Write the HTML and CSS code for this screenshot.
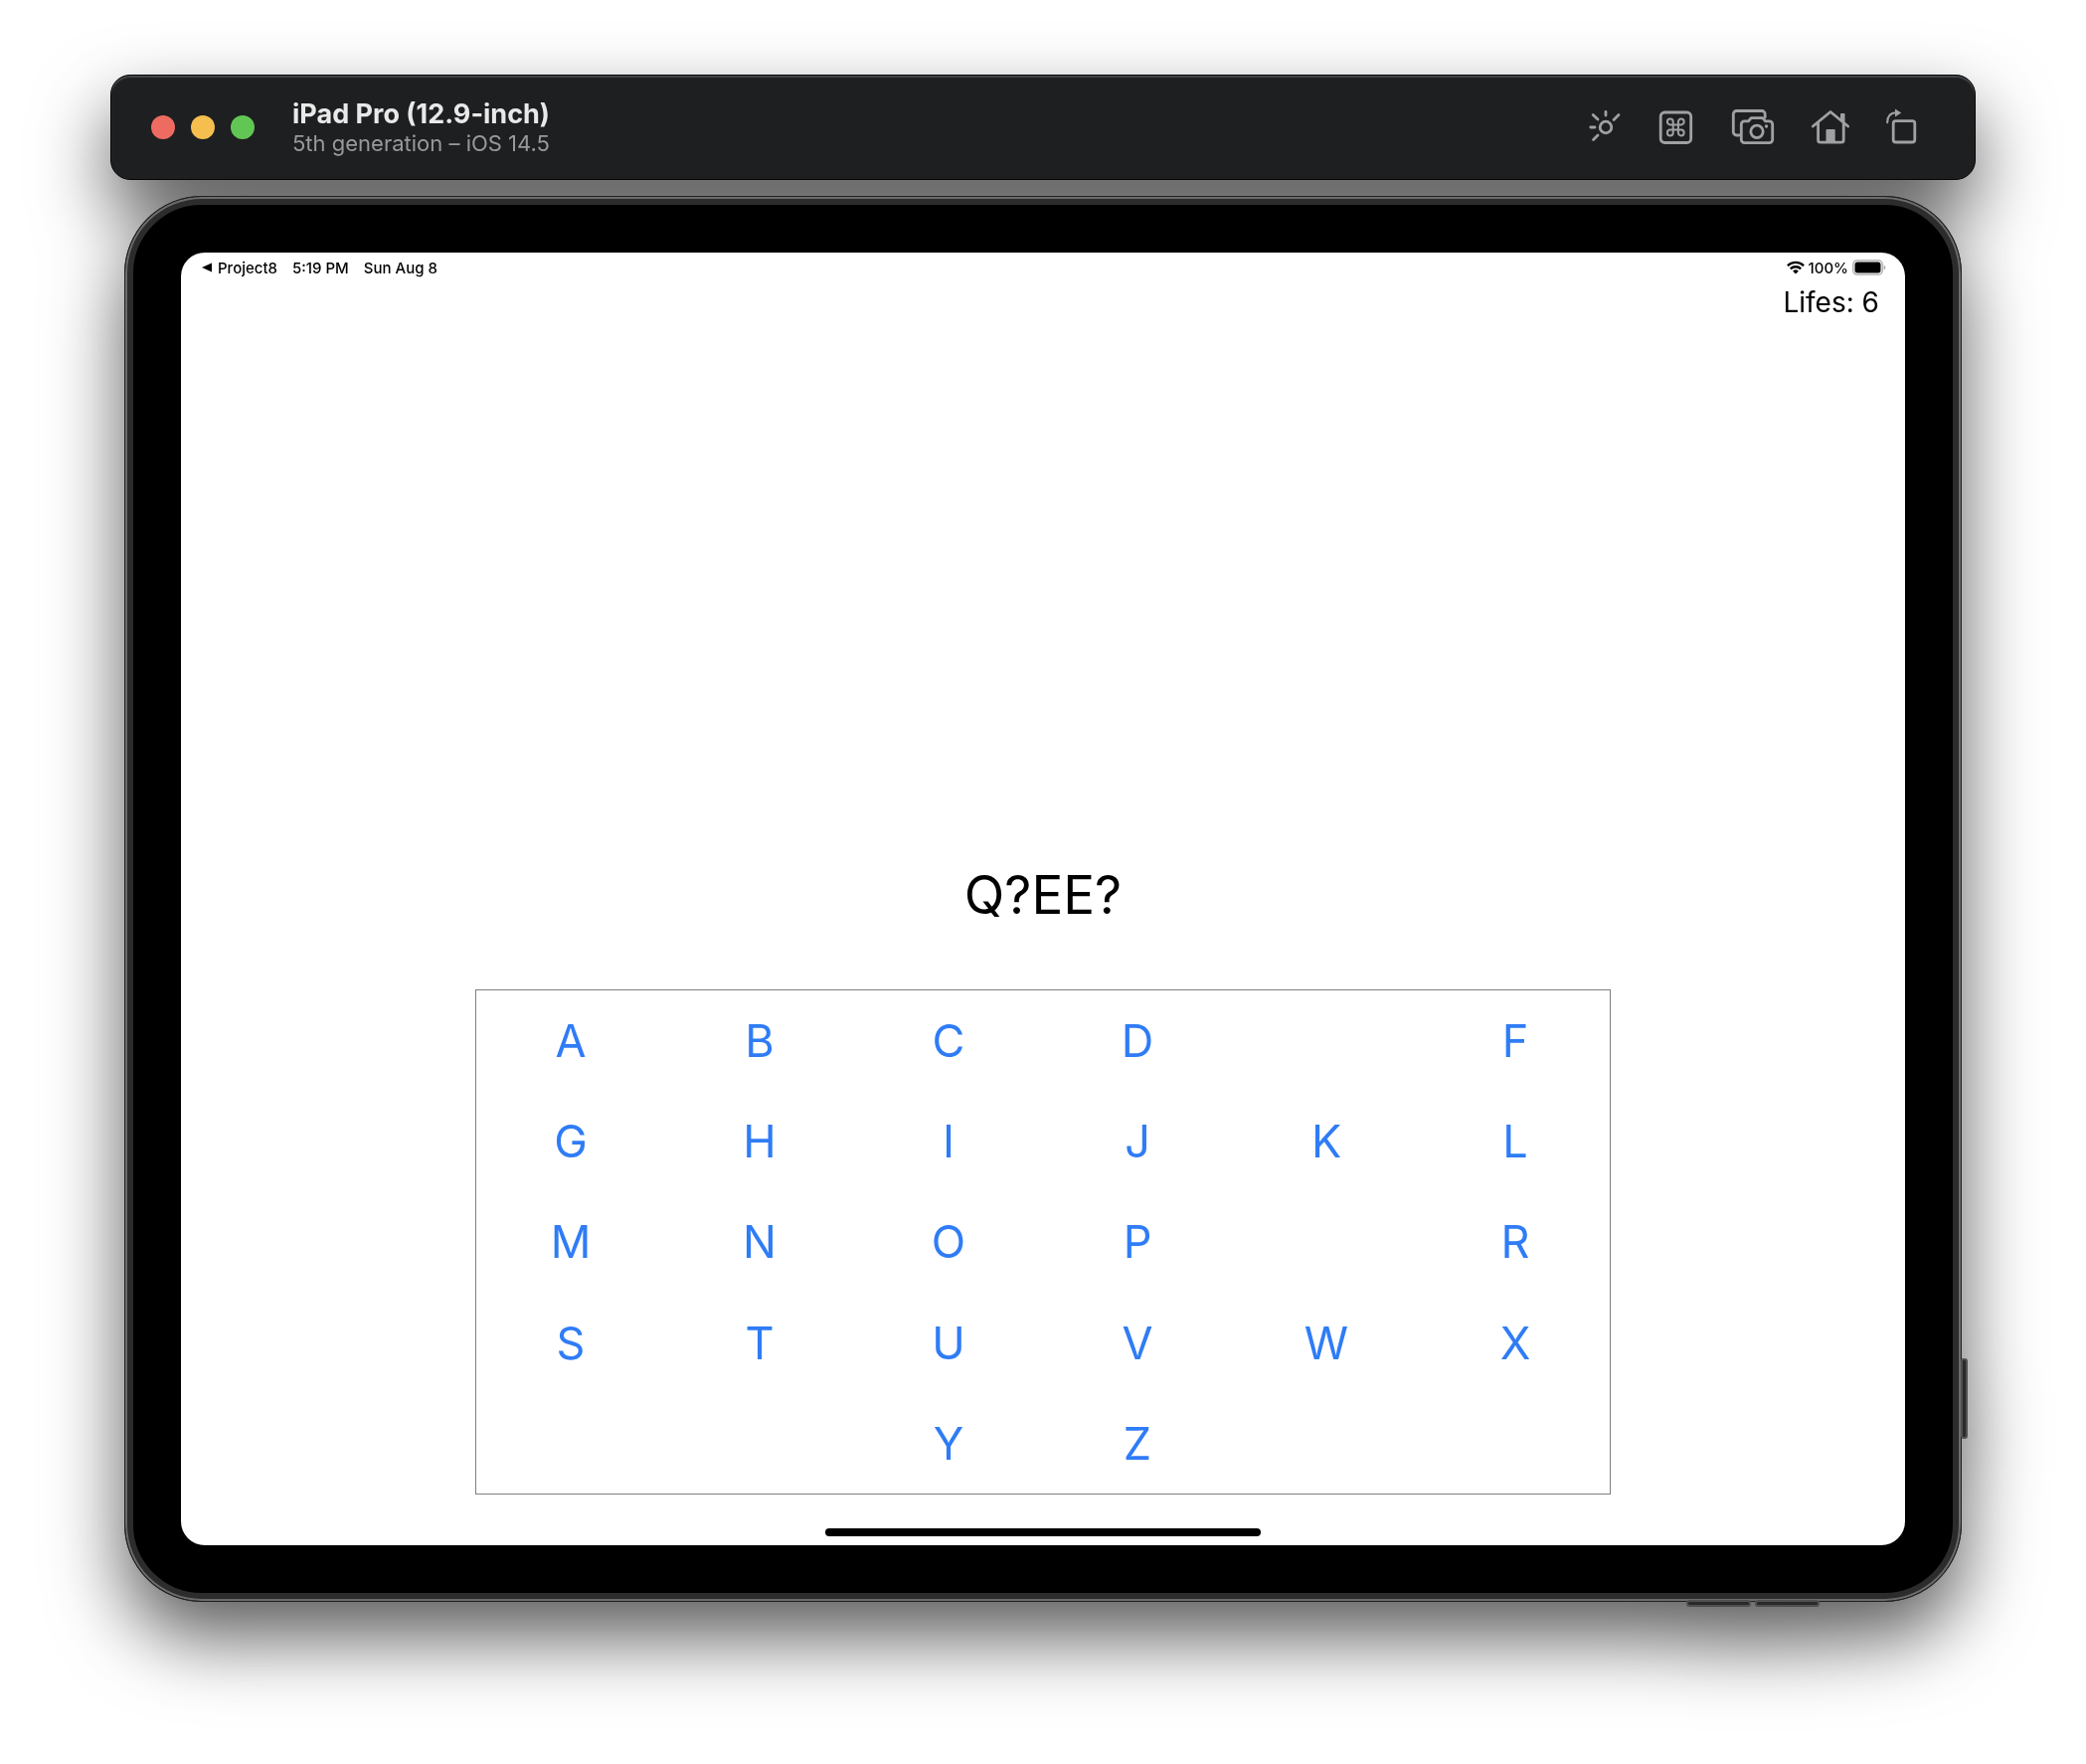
FILE: index.html
```html
<!DOCTYPE html>
<html lang="en">
<head>
<meta charset="utf-8">
<title>iPad Pro (12.9-inch)</title>
<link rel="stylesheet" href="styles.css">
</head>
<body>
<div class="simulator">
<header class="toolbar">
  <div class="lights">
    <button class="light light-close" aria-label="Close"></button>
    <button class="light light-minimize" aria-label="Minimize"></button>
    <button class="light light-zoom" aria-label="Zoom"></button>
  </div>
  <div class="titles">
    <h1 class="title">iPad Pro (12.9-inch)</h1>
    <p class="subtitle">5th generation – iOS 14.5</p>
  </div>
  <div class="tools">
    <button class="tool" aria-label="Appearance">
      <svg width="32" height="36" viewBox="0 0 32 36"><circle cx="16" cy="18" r="5.8"/><path d="M16 2.500V6M29 5.500L24 10.500M3.200 5.500L8 10M.8 18H5M3.500 30.500L8 26"/></svg>
    </button>
    <button class="tool" aria-label="Keyboard shortcuts">
      <svg width="34" height="36" viewBox="0 0 34 36"><rect x="1.200" y="3" width="30.500" height="30.500" rx="4"/><path stroke-width="2" d="M13.700 12.500V23.500a2.900 2.900 0 1 1-2.900-2.900H21.800a2.900 2.900 0 1 1-2.900 2.900V12.500a2.900 2.900 0 1 1 2.900 2.900H10.800a2.900 2.900 0 1 1 2.900-2.900Z"/></svg>
    </button>
    <button class="tool" aria-label="Screenshot">
      <svg width="42" height="36" viewBox="0 0 42 36"><path d="M8 26H5.500a3.200 3.200 0 0 1-3.200-3.200V4.700a3.200 3.200 0 0 1 3.200-3.200H31a3.200 3.200 0 0 1 3.200 3.200V8"/><path d="M13.500 11.800h4l2.700-3.200h11.600l2.700 3.200h4a3.200 3.200 0 0 1 3.200 3.200v15.500a3.200 3.200 0 0 1-3.200 3.200h-25a3.200 3.200 0 0 1-3.200-3.200V15a3.200 3.200 0 0 1 3.200-3.200Z"/><circle cx="26" cy="22.300" r="6.200"/><circle class="solid" cx="35.500" cy="17" r="1.700"/></svg>
    </button>
    <button class="tool" aria-label="Home">
      <svg width="38" height="36" viewBox="0 0 38 36"><path d="M2.300 17L20 2.500 37.700 17M7.600 13.500V31a2.200 2.200 0 0 0 2.200 2.200H31a2.200 2.200 0 0 0 2.200-2.200V13.500"/><path class="solid" d="M30 5a1 1 0 0 1 1-1H33.500a1 1 0 0 1 1 1V14l-4.500-3.500ZM15.500 21a1 1 0 0 1 1-1h7.200a1 1 0 0 1 1 1V33h-9.200Z"/></svg>
    </button>
    <button class="tool" aria-label="Rotate">
      <svg width="30" height="36" viewBox="0 0 30 36"><rect x="7.200" y="11.700" width="21.600" height="21.300" rx="2.500"/><path stroke-width="2" d="M1.200 13.300C1.200 6.500 4 3.500 10 3.300"/><path class="solid" d="M9-.5L15.200 3.400 9 7.500Z"/></svg>
    </button>
  </div>
</header>

<main class="device">
  <span class="side-button side-button-power"></span>
  <span class="side-button side-button-up"></span>
  <span class="side-button side-button-down"></span>
  <div class="screen">
    <div class="status">
      <a class="back" href="#"><svg width="10" height="10" viewBox="0 0 10 10"><path d="M10 .5V9.500L0 5Z"/></svg>Project8</a>
      <span>5:19 PM</span>
      <span>Sun Aug 8</span>
      <div class="status-right">
        <svg width="18" height="14" viewBox="0 0 18 14"><path fill="none" stroke="#000" stroke-width="2.300" d="M.9 5.200a11.500 11.500 0 0 1 16.200 0M3.800 8.400a7.400 7.400 0 0 1 10.400 0"/><path d="M9 13.500L6.100 10.700a4.100 4.100 0 0 1 5.800 0Z"/></svg>
        <span>100%</span>
        <svg width="34" height="16" viewBox="0 0 34 16"><rect x=".8" y=".8" width="29.400" height="14.400" rx="4" fill="none" stroke="#a8a8a8" stroke-width="1.300"/><rect x="2.500" y="2.500" width="26" height="11" rx="2.500"/><path d="M31.700 5.500a2.700 2.700 0 0 1 0 5Z" fill="#a8a8a8"/></svg>
      </div>
    </div>
    <p class="lives">Lifes: 6</p>
    <p class="word">Q?EE?</p>
    <div class="keys">
      <button class="key">A</button>
      <button class="key">B</button>
      <button class="key">C</button>
      <button class="key">D</button>
      <button class="key key-after-used">F</button>
      <button class="key">G</button>
      <button class="key">H</button>
      <button class="key">I</button>
      <button class="key">J</button>
      <button class="key">K</button>
      <button class="key">L</button>
      <button class="key">M</button>
      <button class="key">N</button>
      <button class="key">O</button>
      <button class="key">P</button>
      <button class="key key-after-used">R</button>
      <button class="key">S</button>
      <button class="key">T</button>
      <button class="key">U</button>
      <button class="key">V</button>
      <button class="key">W</button>
      <button class="key">X</button>
      <button class="key key-last-row">Y</button>
      <button class="key">Z</button>
    </div>
    <div class="home-indicator"></div>
  </div>
</main>
</div>
</body>
</html>
```
FILE: styles.css
```css
* {
  box-sizing: border-box;
}

body {
  min-height: 100vh;
  margin: 0;
  padding: 75px 111px;
  background: #fff;
  color: #000;
  font-family: Inter, "Liberation Sans", sans-serif;
}

h1,
p {
  margin: 0;
}

button {
  padding: 0;
  border: 0;
  background: none;
  font: inherit;
}

svg {
  display: block;
  overflow: visible;
}

/* The bar and the tablet cast one shared shadow */
.simulator {
  filter: drop-shadow(0 36px 38px rgba(0, 0, 0, 0.64));
}

/* Simulator window bar */
.toolbar {
  display: flex;
  align-items: center;
  height: 106px;
  padding: 0 59px 0 40px;
  border: 1px solid #050506;
  border-radius: 20px;
  background: #1e1f21;
  box-shadow: inset 0 2px 1px #45484a;
}

.lights {
  display: flex;
  gap: 16px;
}

.light {
  width: 24px;
  height: 24px;
  border-radius: 50%;
}

.light-close {
  background: #ed6b60;
}

.light-minimize {
  background: #f5be4f;
}

.light-zoom {
  background: #62c655;
}

.titles {
  margin-left: 38px;
  padding-top: 2px;
}

.title {
  color: #e9e9e9;
  font-size: 27px;
  font-weight: 700;
  line-height: 30px;
}

.subtitle {
  color: #98999a;
  font-size: 22px;
  line-height: 28px;
}

.tools {
  display: flex;
  gap: 38px;
  margin-left: auto;
}

.tool svg {
  fill: none;
  stroke: #a0a1a2;
  stroke-width: 2.8;
  stroke-linecap: round;
  stroke-linejoin: round;
}

.tool .solid {
  fill: #a0a1a2;
  stroke: none;
}

/* Tablet body */
.device {
  position: relative;
  margin: 16px 14px 0;
  padding: 48px;
  border: 9px solid #2c2c2c;
  border-radius: 78px;
  background: #000;
}

.device::before {
  content: "";
  position: absolute;
  inset: -9px;
  border: 1px solid #222;
  border-radius: 78px;
  box-shadow: inset 0 0 0 2px #6b6b6b;
}

.side-button {
  position: absolute;
  border: 2px solid #505050;
  border-radius: 3px;
  background: #2a2a2a;
}

.side-button-power {
  right: -15px;
  bottom: 155px;
  width: 7px;
  height: 81px;
}

.side-button-up,
.side-button-down {
  bottom: -14px;
  width: 65px;
  height: 7px;
}

.side-button-up {
  right: 203px;
}

.side-button-down {
  right: 134px;
}

.screen {
  position: relative;
  display: flex;
  flex-direction: column;
  align-items: center;
  min-height: 1300px;
  padding-bottom: 9px;
  border-radius: 24px;
  background: #fff;
}

.status {
  display: flex;
  align-items: center;
  align-self: stretch;
  gap: 15px;
  height: 30px;
  padding: 0 19px 0 21px;
  font-size: 15px;
  font-weight: 500;
}

.back {
  display: flex;
  align-items: center;
  gap: 6px;
  color: inherit;
  text-decoration: none;
}

.status-right {
  display: flex;
  align-items: center;
  gap: 4px;
  margin-left: auto;
}

.lives {
  align-self: flex-end;
  margin-right: 26px;
  font-size: 28px;
  line-height: 40px;
}

.word {
  margin-top: auto;
  margin-bottom: 63px;
  font-size: 53px;
  line-height: 64px;
}

.keys {
  display: grid;
  grid-template-columns: repeat(6, 1fr);
  grid-template-rows: repeat(5, 1fr);
  width: min(100%, 1142px);
  min-height: 508px;
  margin-bottom: 34px;
  border: 1px solid #808080;
}

.key {
  color: #2f7cf6;
  font-size: 45px;
}

.key-after-used {
  grid-column: 6;
}

.key-last-row {
  grid-column: 3;
}

.home-indicator {
  width: 438px;
  height: 8px;
  border-radius: 4px;
  background: #000;
}
```
